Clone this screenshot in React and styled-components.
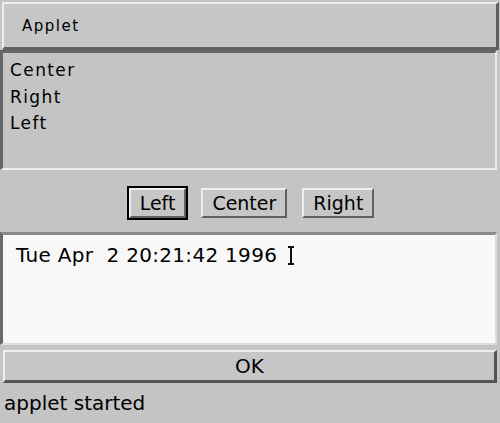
import React from 'react';
import styled, { createGlobalStyle } from 'styled-components';

const GlobalStyle = createGlobalStyle`
    html, body {
        margin: 0;
        padding: 0;
        background-color: #c4c4c4;
    }
`

const Frame = styled.div`
    width: 500px;
    height: 423px;
    background-color: #c4c4c4;
    display: flex;
    flex-direction: column;
    font-family: "DejaVu Sans", "Liberation Sans", sans-serif;
    color: #000000;
    overflow: hidden;
`

const TitleBar = styled.div`
    margin: 2px 1px 0 2px;
    height: 43px;
    display: flex;
    align-items: center;
    padding-left: 18px;
    background-color: #c6c6c6;
    border-top: 2px solid #eeeeee;
    border-left: 2px solid #eeeeee;
    border-right: 3px solid #606060;
    border-bottom: 3px solid #606060;
    font-size: 15px;
    letter-spacing: 1.5px;
`

const ListPanel = styled.div`
    height: 111px;
    margin-right: 3px;
    padding: 4px 0 0 7px;
    border-top: 3px solid #666666;
    border-left: 3px solid #666666;
    border-bottom: 2px solid #eeeeee;
    border-right: 2px solid #eeeeee;
    font-size: 17px;
    letter-spacing: 1.4px;
    line-height: 26.5px;
`

const ButtonRow = styled.div`
    display: flex;
    justify-content: center;
    gap: 15px;
    padding-top: 18px;
    padding-left: 3px;
`

const PushButton = styled.div`
    height: 26px;
    padding: 0 9px;
    display: flex;
    align-items: center;
    justify-content: center;
    background-color: #c6c6c6;
    border-top: 2px solid #eeeeee;
    border-left: 2px solid #eeeeee;
    border-right: 2px solid #606060;
    border-bottom: 2px solid #606060;
    font-size: 19px;
    box-shadow: ${props => props.selected ? '0 0 0 2px #000000' : 'none'};
`

const TextField = styled.div`
    margin: 14px 3px 0 0;
    height: 100px;
    padding: 8px 0 0 13px;
    background-color: #f8f8f8;
    border-top: 3px solid #8a8a8a;
    border-left: 3px solid #6a6a6a;
    border-right: 2px solid #dddddd;
    border-bottom: 2px solid #dddddd;
    font-size: 20px;
    letter-spacing: 0.3px;
    line-height: 24px;
    white-space: pre;
    display: flex;
    align-items: flex-start;
`

const Caret = styled.span`
    display: inline-flex;
    margin-left: 10px;
    margin-top: 3px;
`

const OkButton = styled.div`
    margin: 5px 3px 0 3px;
    height: 28px;
    display: flex;
    align-items: center;
    justify-content: center;
    background-color: #c6c6c6;
    border-top: 2px solid #eeeeee;
    border-left: 2px solid #eeeeee;
    border-right: 3px solid #555555;
    border-bottom: 3px solid #555555;
    font-size: 20px;
`

const Status = styled.div`
    padding: 8px 0 0 4px;
    font-size: 20px;
`

export default function App() {

    const buttons = ['Left', 'Center', 'Right'];

    return (
        <Frame>
            <GlobalStyle />
            <TitleBar>Applet</TitleBar>
            <ListPanel>
                <div>Center</div>
                <div>Right</div>
                <div>Left</div>
            </ListPanel>
            <ButtonRow>
                {buttons.map((label, index) => (
                    <PushButton key={index} selected={index === 0}>{label}</PushButton>
                ))}
            </ButtonRow>
            <TextField>
                Tue Apr  2 20:21:42 1996
                <Caret>
                    <svg width="8" height="19" viewBox="0 0 8 19">
                        <path d="M1 1H7M4 1V18M1 18H7" stroke="#111" strokeWidth="2" fill="none" />
                    </svg>
                </Caret>
            </TextField>
            <OkButton>OK</OkButton>
            <Status>applet started</Status>
        </Frame>
    )
}
